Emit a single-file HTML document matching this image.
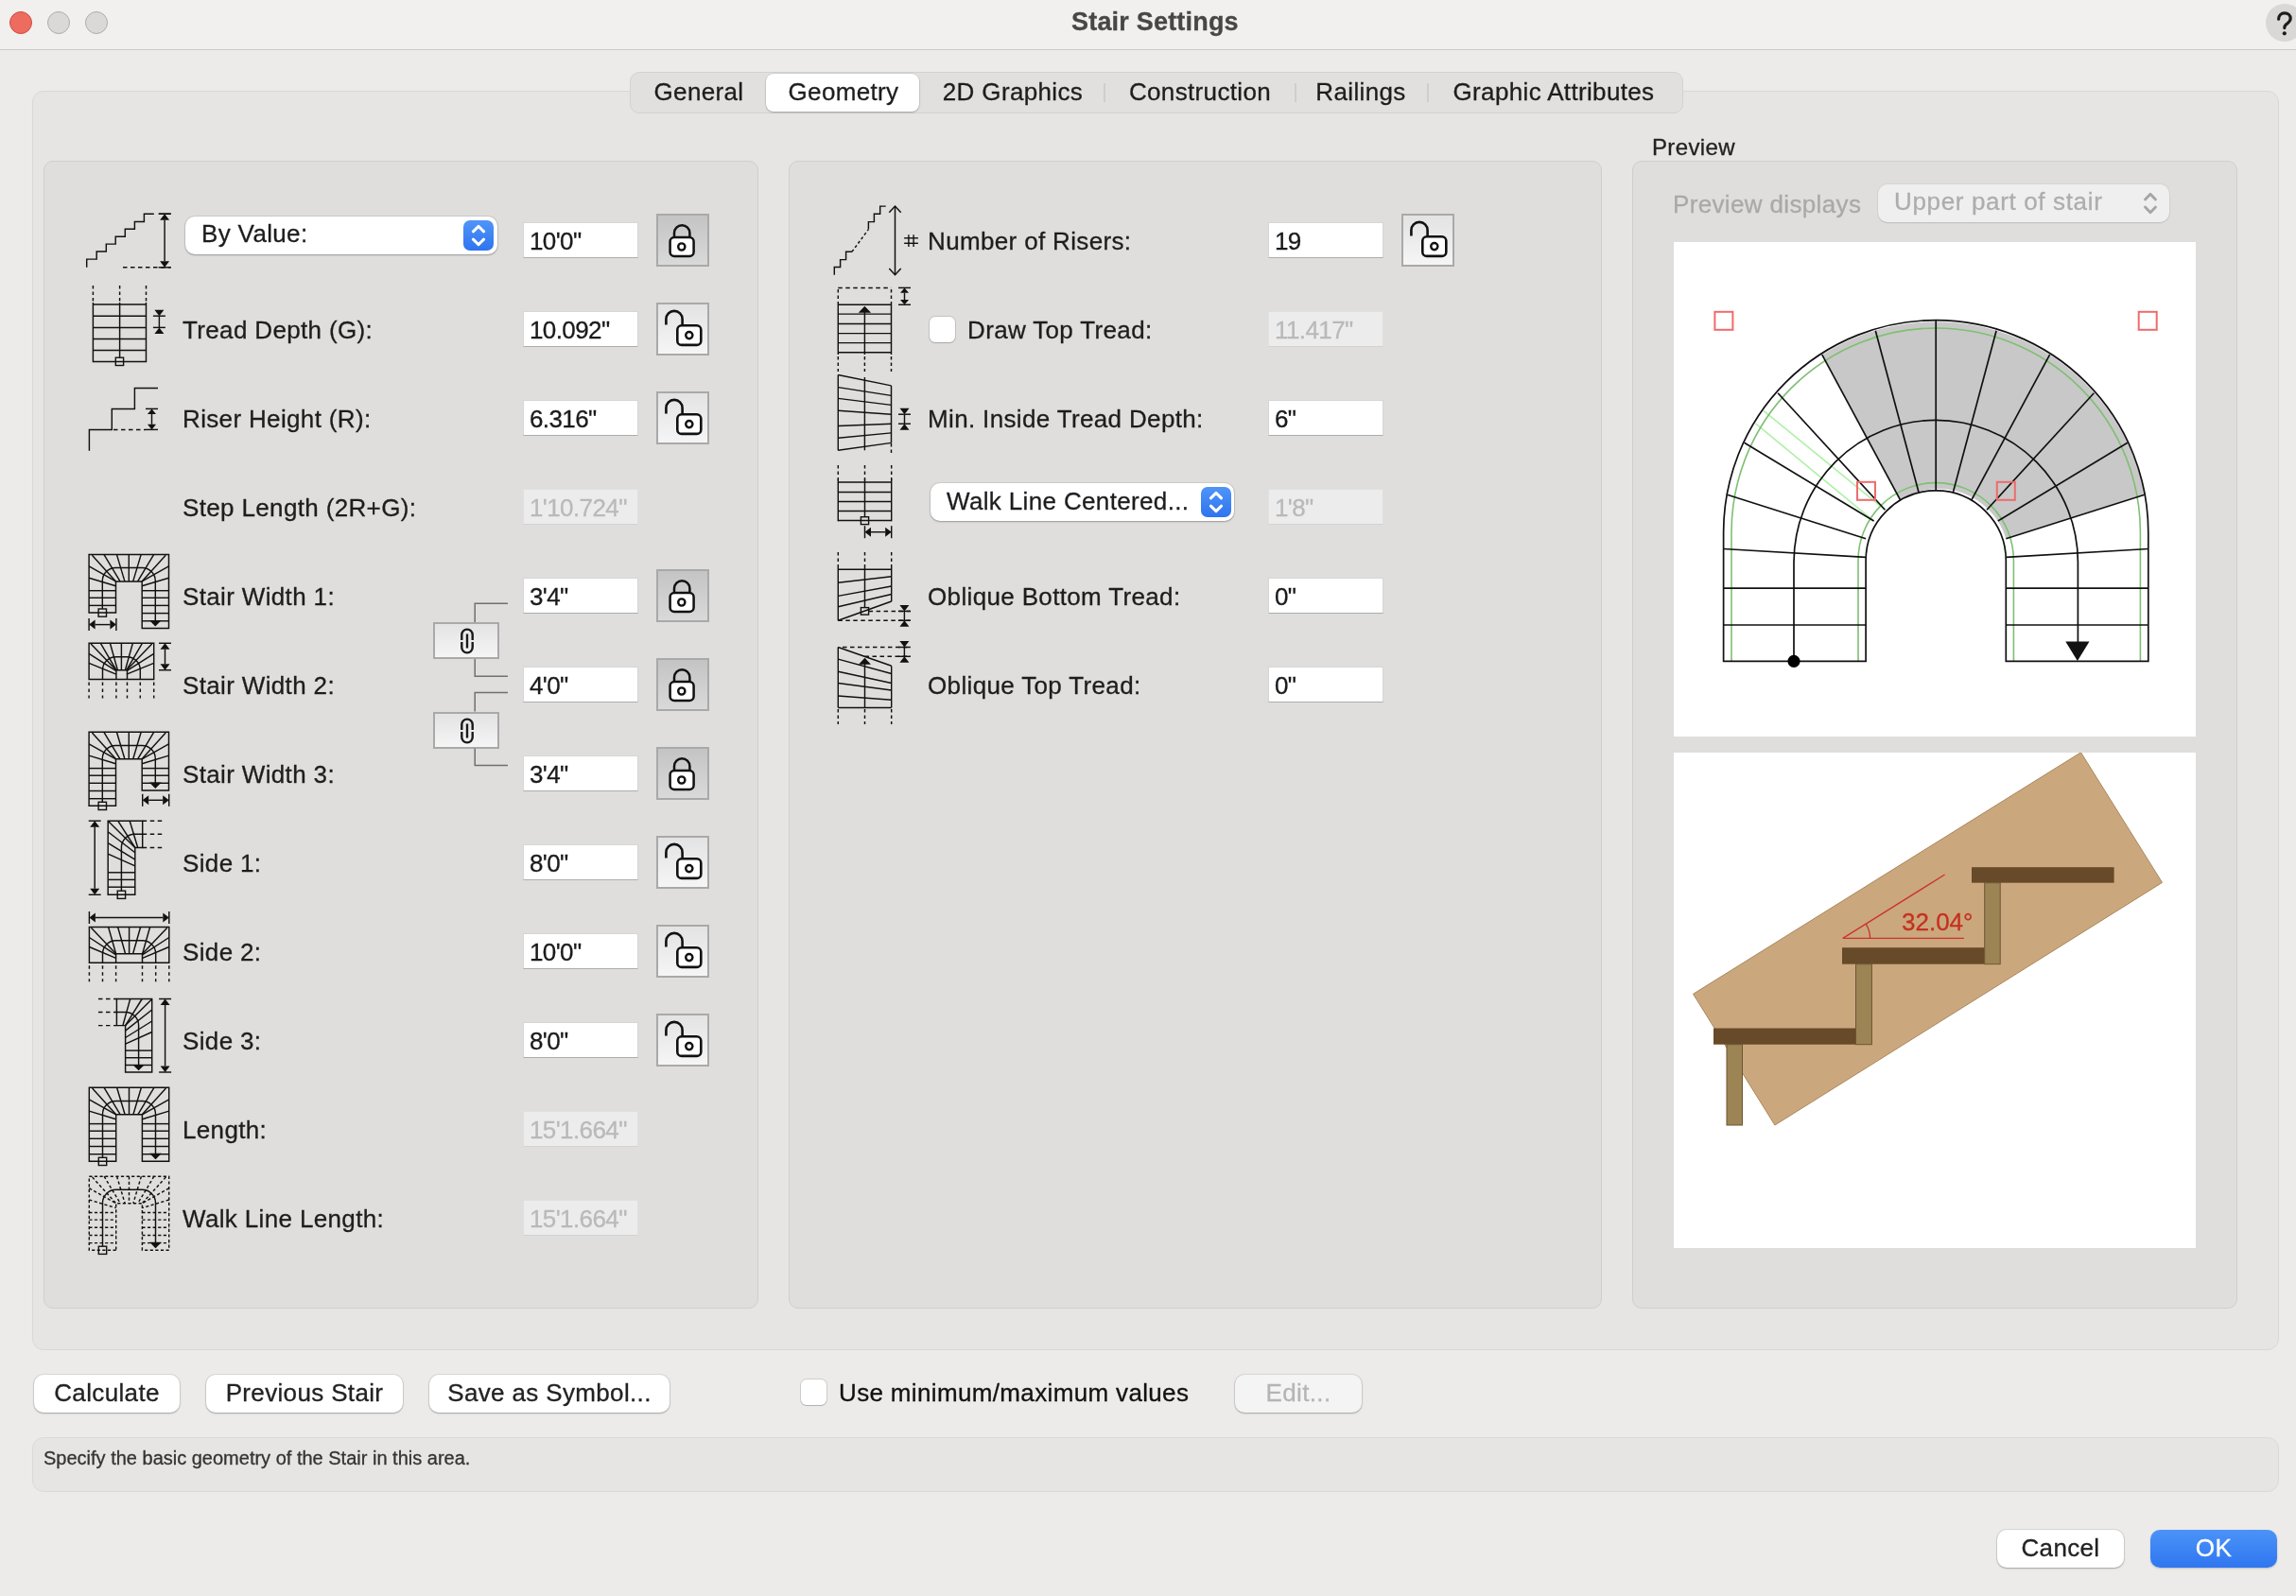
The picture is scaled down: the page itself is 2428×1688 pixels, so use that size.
<!DOCTYPE html>
<html><head><meta charset="utf-8"><title>Stair Settings</title><style>
*{margin:0;padding:0;box-sizing:border-box}
html,body{width:2428px;height:1688px;overflow:hidden}
body{background:#ecebe9;font-family:"Liberation Sans",sans-serif;color:#222;position:relative}
.a{position:absolute}
.t{position:absolute;white-space:nowrap;letter-spacing:0.35px;color:#1d1d1d;will-change:transform;-webkit-text-stroke:0.3px currentColor}
.inp{position:absolute;background:#fff;border:1px solid #d6d6d6;border-bottom:1.5px solid #adadad}
.dis{background:#ececec;border:1px solid #e0e0e0;border-bottom:1px solid #d2d2d2}
.lk{position:absolute;width:56px;height:56px;border:2px solid #a9a9a9;background:linear-gradient(#e3e3e3,#f5f5f5)}
.lk.on{background:linear-gradient(#c4c4c4,#d9d9d9)}
.btn{position:absolute;background:#fff;border-radius:10px;box-shadow:0 0 0 1px rgba(0,0,0,0.08),0 1px 2px rgba(0,0,0,0.25)}
svg{position:absolute;overflow:visible}
</style></head>
<body>
<div class="a" style="left:0px;top:0px;width:2428px;height:53px;background:#f1f0ee;border-bottom:1.5px solid #cbcac8"></div><div class="a" style="left:10px;top:12px;width:24px;height:24px;border-radius:50%;background:#ee6b60;border:1px solid #d14b40"></div><div class="a" style="left:50px;top:12px;width:24px;height:24px;border-radius:50%;background:#dad9d7;border:1px solid #aeadab"></div><div class="a" style="left:90px;top:12px;width:24px;height:24px;border-radius:50%;background:#dad9d7;border:1px solid #aeadab"></div><div class="t" style="left:1133.0px;top:10.1px;font-size:27px;line-height:27px;color:#474747;font-weight:bold;letter-spacing:0.2px;">Stair Settings</div><div class="a" style="left:2396px;top:4px;width:40px;height:40px;border-radius:50%;background:#d9d8d6"></div><svg style="left:-0.6px;top:0.9px" width="2428" height="60"><path d="M2410.6 19.2 C2410.6 15.2 2413.4 12.9 2416.9 12.9 C2420.5 12.9 2423.2 15.3 2423.2 18.6 C2423.2 21.8 2420.6 23.1 2418.6 24.8 C2417.2 26 2416.8 26.9 2416.8 28.6" fill="none" stroke="#1d1d1d" stroke-width="3.2" stroke-linecap="round"/><circle cx="2416.8" cy="34.3" r="2.1" fill="#1d1d1d"/></svg><div class="a" style="left:34px;top:96px;width:2376px;height:1332px;background:#e6e5e3;border:1px solid #d9d8d6;border-radius:12px"></div><div class="a" style="left:666px;top:76px;width:1114px;height:44px;background:#e1e0de;border:1px solid #d3d2d0;border-radius:10px"></div><div class="a" style="left:810px;top:78px;width:162px;height:40px;background:#fff;border-radius:8px;box-shadow:0 0 0 0.5px rgba(0,0,0,0.12),0 1px 2px rgba(0,0,0,0.22)"></div><div class="a" style="left:1167px;top:88px;width:2px;height:20px;background:#cfcecc"></div><div class="a" style="left:1369px;top:88px;width:2px;height:20px;background:#cfcecc"></div><div class="a" style="left:1509px;top:88px;width:2px;height:20px;background:#cfcecc"></div><div class="t" style="left:439.0px;width:600px;text-align:center;top:83.5px;font-size:26px;line-height:26px;">General</div><div class="t" style="left:591.5px;width:600px;text-align:center;top:83.5px;font-size:26px;line-height:26px;">Geometry</div><div class="t" style="left:771.0px;width:600px;text-align:center;top:83.5px;font-size:26px;line-height:26px;">2D Graphics</div><div class="t" style="left:968.5px;width:600px;text-align:center;top:83.5px;font-size:26px;line-height:26px;">Construction</div><div class="t" style="left:1139.0px;width:600px;text-align:center;top:83.5px;font-size:26px;line-height:26px;">Railings</div><div class="t" style="left:1342.5px;width:600px;text-align:center;top:83.5px;font-size:26px;line-height:26px;">Graphic Attributes</div><div class="a" style="left:46px;top:170px;width:756px;height:1214px;background:#dfdedc;border:1px solid #d0cfcd;border-radius:10px"></div><div class="a" style="left:834px;top:170px;width:860px;height:1214px;background:#dfdedc;border:1px solid #d0cfcd;border-radius:10px"></div><div class="a" style="left:1726px;top:170px;width:640px;height:1214px;background:#dfdedc;border:1px solid #d0cfcd;border-radius:10px"></div><div class="inp" style="left:553px;top:235px;width:121.5px;height:37.5px"></div><div class="t" style="left:560.0px;top:241.8px;font-size:26px;line-height:26px;color:#1a1a1a;letter-spacing:-0.6px;">10'0"</div><div class="lk on" style="left:694px;top:226px"><svg width="56" height="56" style="left:-2px;top:-2px" viewBox="0 0 56 56"><path d="M19 25 V20.5 A8.2 8.2 0 0 1 35.4 20.5 V25" fill="none" stroke="#111" stroke-width="2.5"/><rect x="14.6" y="25" width="25" height="20" rx="4.5" fill="#fff" stroke="#111" stroke-width="2.5"/><circle cx="26.8" cy="35" r="3.6" fill="none" stroke="#111" stroke-width="2.4"/></svg></div><div class="t" style="left:193.0px;top:336.0px;font-size:26px;line-height:26px;">Tread Depth (G):</div><div class="inp" style="left:553px;top:329px;width:121.5px;height:37.5px"></div><div class="t" style="left:560.0px;top:335.8px;font-size:26px;line-height:26px;color:#1a1a1a;letter-spacing:-0.6px;">10.092"</div><div class="lk" style="left:694px;top:320px"><svg width="56" height="56" style="left:-2px;top:-2px" viewBox="0 0 56 56"><path d="M10.4 23.5 V17.5 A8.6 8.6 0 0 1 27.6 17.5 V24.3" fill="none" stroke="#111" stroke-width="2.6"/><rect x="22.3" y="24.3" width="25" height="20.6" rx="4.5" fill="#fff" stroke="#111" stroke-width="2.6"/><circle cx="34.8" cy="34.6" r="3.6" fill="none" stroke="#111" stroke-width="2.4"/></svg></div><div class="t" style="left:193.0px;top:430.0px;font-size:26px;line-height:26px;">Riser Height (R):</div><div class="inp" style="left:553px;top:423px;width:121.5px;height:37.5px"></div><div class="t" style="left:560.0px;top:429.8px;font-size:26px;line-height:26px;color:#1a1a1a;letter-spacing:-0.6px;">6.316"</div><div class="lk" style="left:694px;top:414px"><svg width="56" height="56" style="left:-2px;top:-2px" viewBox="0 0 56 56"><path d="M10.4 23.5 V17.5 A8.6 8.6 0 0 1 27.6 17.5 V24.3" fill="none" stroke="#111" stroke-width="2.6"/><rect x="22.3" y="24.3" width="25" height="20.6" rx="4.5" fill="#fff" stroke="#111" stroke-width="2.6"/><circle cx="34.8" cy="34.6" r="3.6" fill="none" stroke="#111" stroke-width="2.4"/></svg></div><div class="t" style="left:193.0px;top:524.0px;font-size:26px;line-height:26px;">Step Length (2R+G):</div><div class="inp dis" style="left:553px;top:517px;width:121.5px;height:37.5px"></div><div class="t" style="left:560.0px;top:523.8px;font-size:26px;line-height:26px;color:#b9b9b9;letter-spacing:-0.6px;">1'10.724"</div><div class="t" style="left:193.0px;top:618.0px;font-size:26px;line-height:26px;">Stair Width 1:</div><div class="inp" style="left:553px;top:611px;width:121.5px;height:37.5px"></div><div class="t" style="left:560.0px;top:617.8px;font-size:26px;line-height:26px;color:#1a1a1a;letter-spacing:-0.6px;">3'4"</div><div class="lk on" style="left:694px;top:602px"><svg width="56" height="56" style="left:-2px;top:-2px" viewBox="0 0 56 56"><path d="M19 25 V20.5 A8.2 8.2 0 0 1 35.4 20.5 V25" fill="none" stroke="#111" stroke-width="2.5"/><rect x="14.6" y="25" width="25" height="20" rx="4.5" fill="#fff" stroke="#111" stroke-width="2.5"/><circle cx="26.8" cy="35" r="3.6" fill="none" stroke="#111" stroke-width="2.4"/></svg></div><div class="t" style="left:193.0px;top:712.0px;font-size:26px;line-height:26px;">Stair Width 2:</div><div class="inp" style="left:553px;top:705px;width:121.5px;height:37.5px"></div><div class="t" style="left:560.0px;top:711.8px;font-size:26px;line-height:26px;color:#1a1a1a;letter-spacing:-0.6px;">4'0"</div><div class="lk on" style="left:694px;top:696px"><svg width="56" height="56" style="left:-2px;top:-2px" viewBox="0 0 56 56"><path d="M19 25 V20.5 A8.2 8.2 0 0 1 35.4 20.5 V25" fill="none" stroke="#111" stroke-width="2.5"/><rect x="14.6" y="25" width="25" height="20" rx="4.5" fill="#fff" stroke="#111" stroke-width="2.5"/><circle cx="26.8" cy="35" r="3.6" fill="none" stroke="#111" stroke-width="2.4"/></svg></div><div class="t" style="left:193.0px;top:806.0px;font-size:26px;line-height:26px;">Stair Width 3:</div><div class="inp" style="left:553px;top:799px;width:121.5px;height:37.5px"></div><div class="t" style="left:560.0px;top:805.8px;font-size:26px;line-height:26px;color:#1a1a1a;letter-spacing:-0.6px;">3'4"</div><div class="lk on" style="left:694px;top:790px"><svg width="56" height="56" style="left:-2px;top:-2px" viewBox="0 0 56 56"><path d="M19 25 V20.5 A8.2 8.2 0 0 1 35.4 20.5 V25" fill="none" stroke="#111" stroke-width="2.5"/><rect x="14.6" y="25" width="25" height="20" rx="4.5" fill="#fff" stroke="#111" stroke-width="2.5"/><circle cx="26.8" cy="35" r="3.6" fill="none" stroke="#111" stroke-width="2.4"/></svg></div><div class="t" style="left:193.0px;top:900.0px;font-size:26px;line-height:26px;">Side 1:</div><div class="inp" style="left:553px;top:893px;width:121.5px;height:37.5px"></div><div class="t" style="left:560.0px;top:899.8px;font-size:26px;line-height:26px;color:#1a1a1a;letter-spacing:-0.6px;">8'0"</div><div class="lk" style="left:694px;top:884px"><svg width="56" height="56" style="left:-2px;top:-2px" viewBox="0 0 56 56"><path d="M10.4 23.5 V17.5 A8.6 8.6 0 0 1 27.6 17.5 V24.3" fill="none" stroke="#111" stroke-width="2.6"/><rect x="22.3" y="24.3" width="25" height="20.6" rx="4.5" fill="#fff" stroke="#111" stroke-width="2.6"/><circle cx="34.8" cy="34.6" r="3.6" fill="none" stroke="#111" stroke-width="2.4"/></svg></div><div class="t" style="left:193.0px;top:994.0px;font-size:26px;line-height:26px;">Side 2:</div><div class="inp" style="left:553px;top:987px;width:121.5px;height:37.5px"></div><div class="t" style="left:560.0px;top:993.8px;font-size:26px;line-height:26px;color:#1a1a1a;letter-spacing:-0.6px;">10'0"</div><div class="lk" style="left:694px;top:978px"><svg width="56" height="56" style="left:-2px;top:-2px" viewBox="0 0 56 56"><path d="M10.4 23.5 V17.5 A8.6 8.6 0 0 1 27.6 17.5 V24.3" fill="none" stroke="#111" stroke-width="2.6"/><rect x="22.3" y="24.3" width="25" height="20.6" rx="4.5" fill="#fff" stroke="#111" stroke-width="2.6"/><circle cx="34.8" cy="34.6" r="3.6" fill="none" stroke="#111" stroke-width="2.4"/></svg></div><div class="t" style="left:193.0px;top:1088.0px;font-size:26px;line-height:26px;">Side 3:</div><div class="inp" style="left:553px;top:1081px;width:121.5px;height:37.5px"></div><div class="t" style="left:560.0px;top:1087.8px;font-size:26px;line-height:26px;color:#1a1a1a;letter-spacing:-0.6px;">8'0"</div><div class="lk" style="left:694px;top:1072px"><svg width="56" height="56" style="left:-2px;top:-2px" viewBox="0 0 56 56"><path d="M10.4 23.5 V17.5 A8.6 8.6 0 0 1 27.6 17.5 V24.3" fill="none" stroke="#111" stroke-width="2.6"/><rect x="22.3" y="24.3" width="25" height="20.6" rx="4.5" fill="#fff" stroke="#111" stroke-width="2.6"/><circle cx="34.8" cy="34.6" r="3.6" fill="none" stroke="#111" stroke-width="2.4"/></svg></div><div class="t" style="left:193.0px;top:1182.0px;font-size:26px;line-height:26px;">Length:</div><div class="inp dis" style="left:553px;top:1175px;width:121.5px;height:37.5px"></div><div class="t" style="left:560.0px;top:1181.8px;font-size:26px;line-height:26px;color:#b9b9b9;letter-spacing:-0.6px;">15'1.664"</div><div class="t" style="left:193.0px;top:1276.0px;font-size:26px;line-height:26px;">Walk Line Length:</div><div class="inp dis" style="left:553px;top:1269px;width:121.5px;height:37.5px"></div><div class="t" style="left:560.0px;top:1275.8px;font-size:26px;line-height:26px;color:#b9b9b9;letter-spacing:-0.6px;">15'1.664"</div><div class="btn" style="left:196px;top:229px;width:330px;height:40px;border-radius:10px"></div><div class="t" style="left:213.0px;top:233.8px;font-size:26px;line-height:26px;">By Value:</div><div class="a" style="left:490px;top:233px;width:32px;height:32px;border-radius:7px;background:linear-gradient(#4f95f8,#2f74ef)"></div><svg style="left:490px;top:233px" width="32" height="32" viewBox="0 0 32 32"><path d="M10.4 11.8 L16 6.4 L21.6 11.8 M10.4 20.2 L16 25.6 L21.6 20.2" fill="none" stroke="#fff" stroke-width="3" stroke-linecap="round" stroke-linejoin="round"/></svg><div class="lk" style="left:458px;top:658px;width:70px;height:39px"></div><svg style="left:486px;top:664px" width="16" height="28" viewBox="0 0 16 28"><path d="M2.3 13 V7.3 A5.7 5.7 0 0 1 13.7 7.3 V13 M2.3 15 V20.7 A5.7 5.7 0 0 0 13.7 20.7 V15" fill="none" stroke="#1a1a1a" stroke-width="2.4"/><line x1="8" y1="6.5" x2="8" y2="21.5" stroke="#1a1a1a" stroke-width="2.4"/></svg><div class="lk" style="left:458px;top:752.5px;width:70px;height:39px"></div><svg style="left:486px;top:758.5px" width="16" height="28" viewBox="0 0 16 28"><path d="M2.3 13 V7.3 A5.7 5.7 0 0 1 13.7 7.3 V13 M2.3 15 V20.7 A5.7 5.7 0 0 0 13.7 20.7 V15" fill="none" stroke="#1a1a1a" stroke-width="2.4"/><line x1="8" y1="6.5" x2="8" y2="21.5" stroke="#1a1a1a" stroke-width="2.4"/></svg><svg style="left:0;top:0" width="2428" height="1688"><path d="M537 638.3 H502.2 V658 M502.2 697 V715.3 H537 M537 732.5 H502.2 V752.5 M502.2 791.5 V809.4 H537" fill="none" stroke="#707070" stroke-width="1.5"/></svg><div class="t" style="left:981.0px;top:242.0px;font-size:26px;line-height:26px;">Number of Risers:</div><div class="inp" style="left:1341px;top:235px;width:121.5px;height:37.5px"></div><div class="t" style="left:1348.0px;top:241.8px;font-size:26px;line-height:26px;color:#1a1a1a;letter-spacing:-0.6px;">19</div><div class="lk" style="left:1482px;top:226px"><svg width="56" height="56" style="left:-2px;top:-2px" viewBox="0 0 56 56"><path d="M10.4 23.5 V17.5 A8.6 8.6 0 0 1 27.6 17.5 V24.3" fill="none" stroke="#111" stroke-width="2.6"/><rect x="22.3" y="24.3" width="25" height="20.6" rx="4.5" fill="#fff" stroke="#111" stroke-width="2.6"/><circle cx="34.8" cy="34.6" r="3.6" fill="none" stroke="#111" stroke-width="2.4"/></svg></div><div class="t" style="left:1023.0px;top:336.0px;font-size:26px;line-height:26px;">Draw Top Tread:</div><div class="inp dis" style="left:1341px;top:329px;width:121.5px;height:37.5px"></div><div class="t" style="left:1348.0px;top:335.8px;font-size:26px;line-height:26px;color:#b9b9b9;letter-spacing:-0.6px;">11.417"</div><div class="t" style="left:981.0px;top:430.0px;font-size:26px;line-height:26px;">Min. Inside Tread Depth:</div><div class="inp" style="left:1341px;top:423px;width:121.5px;height:37.5px"></div><div class="t" style="left:1348.0px;top:429.8px;font-size:26px;line-height:26px;color:#1a1a1a;letter-spacing:-0.6px;">6"</div><div class="inp dis" style="left:1341px;top:517px;width:121.5px;height:37.5px"></div><div class="t" style="left:1348.0px;top:523.8px;font-size:26px;line-height:26px;color:#b9b9b9;letter-spacing:-0.6px;">1'8"</div><div class="t" style="left:981.0px;top:618.0px;font-size:26px;line-height:26px;">Oblique Bottom Tread:</div><div class="inp" style="left:1341px;top:611px;width:121.5px;height:37.5px"></div><div class="t" style="left:1348.0px;top:617.8px;font-size:26px;line-height:26px;color:#1a1a1a;letter-spacing:-0.6px;">0"</div><div class="t" style="left:981.0px;top:712.0px;font-size:26px;line-height:26px;">Oblique Top Tread:</div><div class="inp" style="left:1341px;top:705px;width:121.5px;height:37.5px"></div><div class="t" style="left:1348.0px;top:711.8px;font-size:26px;line-height:26px;color:#1a1a1a;letter-spacing:-0.6px;">0"</div><div class="a" style="left:983px;top:334.5px;width:27px;height:27px;border-radius:6px;background:#fff;box-shadow:0 0 0 1px rgba(0,0,0,0.12),0 1px 1px rgba(0,0,0,0.15)"></div><div class="btn" style="left:984px;top:511px;width:321px;height:40px;border-radius:10px"></div><div class="t" style="left:1001.0px;top:516.5px;font-size:26px;line-height:26px;">Walk Line Centered...</div><div class="a" style="left:1270px;top:515px;width:32px;height:32px;border-radius:7px;background:linear-gradient(#4f95f8,#2f74ef)"></div><svg style="left:1270px;top:515px" width="32" height="32" viewBox="0 0 32 32"><path d="M10.4 11.8 L16 6.4 L21.6 11.8 M10.4 20.2 L16 25.6 L21.6 20.2" fill="none" stroke="#fff" stroke-width="3" stroke-linecap="round" stroke-linejoin="round"/></svg><div class="t" style="left:1747.0px;top:143.7px;font-size:24px;line-height:24px;color:#222;">Preview</div><div class="t" style="left:1769.0px;top:203.0px;font-size:26px;line-height:26px;color:#a9a9a9;">Preview displays</div><div class="a" style="left:1986px;top:195px;width:308px;height:40px;border-radius:10px;background:#efefef;box-shadow:0 0 0 1px rgba(0,0,0,0.04),0 1px 1.5px rgba(0,0,0,0.12)"></div><div class="t" style="left:2003.0px;top:200.0px;font-size:26px;line-height:26px;color:#adadad;letter-spacing:0.65px;">Upper part of stair</div><svg style="left:2262px;top:199px" width="24" height="32" viewBox="0 0 24 32"><path d="M6.5 12 L12 6.3 L17.5 12 M6.5 20 L12 25.7 L17.5 20" fill="none" stroke="#a5a5a5" stroke-width="2.8" stroke-linecap="round" stroke-linejoin="round"/></svg><div class="a" style="left:1770px;top:256px;width:552px;height:523px;background:#fff"></div><div class="a" style="left:1770px;top:796px;width:552px;height:524px;background:#fff"></div><div class="btn" style="left:36px;top:1454px;width:154px;height:40px;background:#fff"></div><div class="t" style="left:-187.0px;width:600px;text-align:center;top:1460.3px;font-size:26px;line-height:26px;color:#222;">Calculate</div><div class="btn" style="left:218px;top:1454px;width:208px;height:40px;background:#fff"></div><div class="t" style="left:22.0px;width:600px;text-align:center;top:1460.3px;font-size:26px;line-height:26px;color:#222;">Previous Stair</div><div class="btn" style="left:454px;top:1454px;width:254px;height:40px;background:#fff"></div><div class="t" style="left:281.0px;width:600px;text-align:center;top:1460.3px;font-size:26px;line-height:26px;color:#222;">Save as Symbol...</div><div class="a" style="left:846.5px;top:1458.5px;width:27px;height:27px;border-radius:6px;background:#fff;box-shadow:0 0 0 1px rgba(0,0,0,0.12),0 1px 1px rgba(0,0,0,0.15)"></div><div class="t" style="left:887.0px;top:1460.3px;font-size:26px;line-height:26px;color:#111;">Use minimum/maximum values</div><div class="btn" style="left:1306px;top:1454px;width:134px;height:40px;background:#f4f4f4"></div><div class="t" style="left:1073.0px;width:600px;text-align:center;top:1460.3px;font-size:26px;line-height:26px;color:#b5b5b5;">Edit...</div><div class="a" style="left:34px;top:1520px;width:2376px;height:57.5px;background:#e6e5e3;border:1px solid #dad9d7;border-radius:12px"></div><div class="t" style="left:46.0px;top:1531.6px;font-size:20px;line-height:20px;color:#333;letter-spacing:0;">Specify the basic geometry of the Stair in this area.</div><div class="btn" style="left:2112px;top:1618px;width:134px;height:40px;background:#fff"></div><div class="t" style="left:1879.0px;width:600px;text-align:center;top:1624.3px;font-size:26px;line-height:26px;color:#222;">Cancel</div><div class="a" style="left:2274px;top:1618px;width:134px;height:40px;border-radius:10px;background:linear-gradient(#4b93f7,#2f76f1);box-shadow:0 1px 2px rgba(0,0,0,0.2)"></div><div class="t" style="left:2041.0px;width:600px;text-align:center;top:1624.0px;font-size:26px;line-height:26px;color:#fff;">OK</div><svg class="a" style="left:0;top:0" width="2428" height="1688" viewBox="0 0 2428 1688"><polyline points="91.70,282.80 91.70,274.10 102.20,274.10 102.20,265.90 112.30,265.90 112.30,258.10 122.20,258.10 122.20,250.20 132.30,250.20 132.30,242.20 142.40,242.20 142.40,234.40 152.40,234.40 152.40,226.20 162.80,226.20" fill="none" stroke="#111" stroke-width="1.45" stroke-linejoin="miter"/><line x1="168.00" y1="226.20" x2="180.80" y2="226.20" stroke="#111" stroke-width="1.45"/><line x1="130.00" y1="282.80" x2="180.80" y2="282.80" stroke="#111" stroke-width="1.45" stroke-dasharray="4.5,3.5"/><line x1="167.60" y1="226.20" x2="180.60" y2="226.20" stroke="#111" stroke-width="1.45"/><line x1="167.60" y1="282.80" x2="180.60" y2="282.80" stroke="#111" stroke-width="1.45"/><line x1="174.10" y1="232.70" x2="174.10" y2="276.30" stroke="#111" stroke-width="1.45"/><polygon points="174.10,226.20 169.10,232.70 179.10,232.70" fill="#111"/><polygon points="174.10,282.80 169.10,276.30 179.10,276.30" fill="#111"/><line x1="98.40" y1="302.00" x2="98.40" y2="320.00" stroke="#111" stroke-width="1.45" stroke-dasharray="3.5,3"/><line x1="126.60" y1="302.00" x2="126.60" y2="320.00" stroke="#111" stroke-width="1.45" stroke-dasharray="3.5,3"/><line x1="154.50" y1="302.00" x2="154.50" y2="320.00" stroke="#111" stroke-width="1.45" stroke-dasharray="3.5,3"/><line x1="98.40" y1="322.00" x2="154.50" y2="322.00" stroke="#111" stroke-width="1.45"/><line x1="98.40" y1="334.20" x2="154.50" y2="334.20" stroke="#111" stroke-width="1.45"/><line x1="98.40" y1="346.40" x2="154.50" y2="346.40" stroke="#111" stroke-width="1.45"/><line x1="98.40" y1="358.50" x2="154.50" y2="358.50" stroke="#111" stroke-width="1.45"/><line x1="98.40" y1="370.50" x2="154.50" y2="370.50" stroke="#111" stroke-width="1.45"/><polyline points="98.40,320.00 98.40,382.50 154.50,382.50 154.50,320.00" fill="none" stroke="#111" stroke-width="1.45" stroke-linejoin="miter"/><line x1="126.60" y1="320.00" x2="126.60" y2="378.20" stroke="#111" stroke-width="1.45"/><rect x="122.30" y="378.20" width="8.30" height="8.30" fill="none" stroke="#111" stroke-width="1.4"/><line x1="161.90" y1="334.20" x2="174.90" y2="334.20" stroke="#111" stroke-width="1.45"/><line x1="161.90" y1="346.40" x2="174.90" y2="346.40" stroke="#111" stroke-width="1.45"/><line x1="168.40" y1="334.20" x2="168.40" y2="346.40" stroke="#111" stroke-width="1.45"/><polygon points="168.40,334.20 163.40,327.70 173.40,327.70" fill="#111"/><polygon points="168.40,346.40 163.40,352.90 173.40,352.90" fill="#111"/><polyline points="94.40,476.70 94.40,454.40 118.30,454.40 118.30,432.40 142.40,432.40 142.40,410.50 167.00,410.50" fill="none" stroke="#111" stroke-width="1.45" stroke-linejoin="miter"/><line x1="120.00" y1="454.40" x2="154.00" y2="454.40" stroke="#111" stroke-width="1.45" stroke-dasharray="4.5,3.5"/><line x1="154.00" y1="454.40" x2="167.00" y2="454.40" stroke="#111" stroke-width="1.45"/><line x1="154.00" y1="432.40" x2="167.00" y2="432.40" stroke="#111" stroke-width="1.45"/><line x1="160.49" y1="432.40" x2="160.51" y2="432.40" stroke="#111" stroke-width="1.45"/><line x1="160.49" y1="454.40" x2="160.51" y2="454.40" stroke="#111" stroke-width="1.45"/><line x1="160.50" y1="438.00" x2="160.50" y2="448.80" stroke="#111" stroke-width="1.45"/><polygon points="160.50,432.40 156.00,438.00 165.00,438.00" fill="#111"/><polygon points="160.50,454.40 156.00,448.80 165.00,448.80" fill="#111"/><path d="M122.50 648.00 H94.10 V586.40 H178.50 V664.40 H150.20 V614.90 H122.50 Z" fill="none" stroke="#111" stroke-width="1.45" /><line x1="136.30" y1="586.40" x2="136.30" y2="614.90" stroke="#111" stroke-width="1.45"/><line x1="123.40" y1="586.40" x2="131.90" y2="614.90" stroke="#111" stroke-width="1.45"/><line x1="149.20" y1="586.40" x2="140.70" y2="614.90" stroke="#111" stroke-width="1.45"/><line x1="109.90" y1="586.40" x2="127.00" y2="614.90" stroke="#111" stroke-width="1.45"/><line x1="162.70" y1="586.40" x2="145.60" y2="614.90" stroke="#111" stroke-width="1.45"/><line x1="97.40" y1="587.20" x2="122.50" y2="614.90" stroke="#111" stroke-width="1.45"/><line x1="175.20" y1="587.20" x2="150.10" y2="614.90" stroke="#111" stroke-width="1.45"/><line x1="94.10" y1="598.90" x2="122.50" y2="614.90" stroke="#111" stroke-width="1.45"/><line x1="178.50" y1="598.90" x2="150.10" y2="614.90" stroke="#111" stroke-width="1.45"/><line x1="94.10" y1="611.20" x2="122.50" y2="619.80" stroke="#111" stroke-width="1.45"/><line x1="178.50" y1="611.20" x2="150.10" y2="619.80" stroke="#111" stroke-width="1.45"/><line x1="94.10" y1="624.70" x2="122.50" y2="624.70" stroke="#111" stroke-width="1.45"/><line x1="150.20" y1="624.70" x2="178.50" y2="624.70" stroke="#111" stroke-width="1.45"/><line x1="94.10" y1="632.30" x2="122.50" y2="632.30" stroke="#111" stroke-width="1.45"/><line x1="150.20" y1="632.30" x2="178.50" y2="632.30" stroke="#111" stroke-width="1.45"/><line x1="94.10" y1="640.40" x2="122.50" y2="640.40" stroke="#111" stroke-width="1.45"/><line x1="150.20" y1="640.40" x2="178.50" y2="640.40" stroke="#111" stroke-width="1.45"/><line x1="150.20" y1="648.60" x2="178.50" y2="648.60" stroke="#111" stroke-width="1.45"/><line x1="150.20" y1="656.80" x2="178.50" y2="656.80" stroke="#111" stroke-width="1.45"/><path d="M108.30 644.00 V614.50 A14 14 0 0 1 122.30 600.50 H150.30 A14 14 0 0 1 164.30 614.50 V661.40" fill="none" stroke="#111" stroke-width="1.45" /><rect x="104.10" y="644.00" width="8.40" height="8.20" fill="none" stroke="#111" stroke-width="1.4"/><polygon points="157.90,655.90 170.70,655.90 164.30,662.40" fill="#111"/><line x1="94.10" y1="654.10" x2="94.10" y2="667.10" stroke="#111" stroke-width="1.45"/><line x1="122.90" y1="654.10" x2="122.90" y2="667.10" stroke="#111" stroke-width="1.45"/><line x1="100.60" y1="660.60" x2="116.40" y2="660.60" stroke="#111" stroke-width="1.45"/><polygon points="94.10,660.60 100.60,655.60 100.60,665.60" fill="#111"/><polygon points="122.90,660.60 116.40,655.60 116.40,665.60" fill="#111"/><path d="M94.10 718.50 V680.30 H162.70 V718.50 Z" fill="none" stroke="#111" stroke-width="1.45" /><path d="M122.90 718.50 V708.70 H134.50 V718.50" fill="none" stroke="#111" stroke-width="1.45" /><path d="M108.50 718.50 V708.70 A14 14 0 0 1 122.50 694.70 H134.30 A14 14 0 0 1 148.30 708.70 V718.50" fill="none" stroke="#111" stroke-width="1.45" /><line x1="128.40" y1="680.30" x2="128.40" y2="708.70" stroke="#111" stroke-width="1.45"/><line x1="116.40" y1="680.30" x2="124.40" y2="708.70" stroke="#111" stroke-width="1.45"/><line x1="140.40" y1="680.30" x2="132.40" y2="708.70" stroke="#111" stroke-width="1.45"/><line x1="106.40" y1="680.30" x2="122.90" y2="708.70" stroke="#111" stroke-width="1.45"/><line x1="150.40" y1="680.30" x2="133.90" y2="708.70" stroke="#111" stroke-width="1.45"/><line x1="96.10" y1="681.10" x2="122.90" y2="708.70" stroke="#111" stroke-width="1.45"/><line x1="160.70" y1="681.10" x2="133.90" y2="708.70" stroke="#111" stroke-width="1.45"/><line x1="94.10" y1="691.30" x2="122.90" y2="709.70" stroke="#111" stroke-width="1.45"/><line x1="162.70" y1="691.30" x2="133.90" y2="709.70" stroke="#111" stroke-width="1.45"/><line x1="94.10" y1="701.30" x2="122.90" y2="713.20" stroke="#111" stroke-width="1.45"/><line x1="162.70" y1="701.30" x2="133.90" y2="713.20" stroke="#111" stroke-width="1.45"/><line x1="94.10" y1="721.50" x2="94.10" y2="738.50" stroke="#111" stroke-width="1.45" stroke-dasharray="3.5,3.5"/><line x1="108.50" y1="721.50" x2="108.50" y2="738.50" stroke="#111" stroke-width="1.45" stroke-dasharray="3.5,3.5"/><line x1="122.90" y1="721.50" x2="122.90" y2="738.50" stroke="#111" stroke-width="1.45" stroke-dasharray="3.5,3.5"/><line x1="134.50" y1="721.50" x2="134.50" y2="738.50" stroke="#111" stroke-width="1.45" stroke-dasharray="3.5,3.5"/><line x1="148.30" y1="721.50" x2="148.30" y2="738.50" stroke="#111" stroke-width="1.45" stroke-dasharray="3.5,3.5"/><line x1="162.70" y1="721.50" x2="162.70" y2="738.50" stroke="#111" stroke-width="1.45" stroke-dasharray="3.5,3.5"/><line x1="168.00" y1="680.30" x2="181.00" y2="680.30" stroke="#111" stroke-width="1.45"/><line x1="168.00" y1="708.70" x2="181.00" y2="708.70" stroke="#111" stroke-width="1.45"/><line x1="174.50" y1="686.80" x2="174.50" y2="702.20" stroke="#111" stroke-width="1.45"/><polygon points="174.50,680.30 169.50,686.80 179.50,686.80" fill="#111"/><polygon points="174.50,708.70 169.50,702.20 179.50,702.20" fill="#111"/><path d="M122.50 852.30 H94.10 V774.30 H178.50 V836.00 H150.20 V802.80 H122.50 Z" fill="none" stroke="#111" stroke-width="1.45" /><line x1="136.30" y1="774.30" x2="136.30" y2="802.80" stroke="#111" stroke-width="1.45"/><line x1="123.40" y1="774.30" x2="131.90" y2="802.80" stroke="#111" stroke-width="1.45"/><line x1="149.20" y1="774.30" x2="140.70" y2="802.80" stroke="#111" stroke-width="1.45"/><line x1="109.90" y1="774.30" x2="127.00" y2="802.80" stroke="#111" stroke-width="1.45"/><line x1="162.70" y1="774.30" x2="145.60" y2="802.80" stroke="#111" stroke-width="1.45"/><line x1="97.40" y1="775.10" x2="122.50" y2="802.80" stroke="#111" stroke-width="1.45"/><line x1="175.20" y1="775.10" x2="150.10" y2="802.80" stroke="#111" stroke-width="1.45"/><line x1="94.10" y1="786.80" x2="122.50" y2="802.80" stroke="#111" stroke-width="1.45"/><line x1="178.50" y1="786.80" x2="150.10" y2="802.80" stroke="#111" stroke-width="1.45"/><line x1="94.10" y1="799.10" x2="122.50" y2="807.70" stroke="#111" stroke-width="1.45"/><line x1="178.50" y1="799.10" x2="150.10" y2="807.70" stroke="#111" stroke-width="1.45"/><line x1="94.10" y1="812.60" x2="122.50" y2="812.60" stroke="#111" stroke-width="1.45"/><line x1="150.20" y1="812.60" x2="178.50" y2="812.60" stroke="#111" stroke-width="1.45"/><line x1="94.10" y1="820.20" x2="122.50" y2="820.20" stroke="#111" stroke-width="1.45"/><line x1="150.20" y1="820.20" x2="178.50" y2="820.20" stroke="#111" stroke-width="1.45"/><line x1="94.10" y1="828.30" x2="122.50" y2="828.30" stroke="#111" stroke-width="1.45"/><line x1="150.20" y1="828.30" x2="178.50" y2="828.30" stroke="#111" stroke-width="1.45"/><line x1="94.10" y1="836.50" x2="122.50" y2="836.50" stroke="#111" stroke-width="1.45"/><line x1="94.10" y1="844.70" x2="122.50" y2="844.70" stroke="#111" stroke-width="1.45"/><path d="M108.30 848.30 V802.40 A14 14 0 0 1 122.30 788.40 H150.30 A14 14 0 0 1 164.30 802.40 V833.00" fill="none" stroke="#111" stroke-width="1.45" /><rect x="104.10" y="848.30" width="8.40" height="8.20" fill="none" stroke="#111" stroke-width="1.4"/><polygon points="157.90,827.50 170.70,827.50 164.30,834.00" fill="#111"/><line x1="150.70" y1="839.80" x2="150.70" y2="852.80" stroke="#111" stroke-width="1.45"/><line x1="178.70" y1="839.80" x2="178.70" y2="852.80" stroke="#111" stroke-width="1.45"/><line x1="157.20" y1="846.30" x2="172.20" y2="846.30" stroke="#111" stroke-width="1.45"/><polygon points="150.70,846.30 157.20,841.30 157.20,851.30" fill="#111"/><polygon points="178.70,846.30 172.20,841.30 172.20,851.30" fill="#111"/><path d="M114.20 946.30 V868.20 H150.70 V896.50 H142.80 V946.30 Z" fill="none" stroke="#111" stroke-width="1.45" /><line x1="150.70" y1="868.20" x2="171.20" y2="868.20" stroke="#111" stroke-width="1.45" stroke-dasharray="4.5,3.5"/><line x1="150.70" y1="882.30" x2="171.20" y2="882.30" stroke="#111" stroke-width="1.45" stroke-dasharray="4.5,3.5"/><line x1="150.70" y1="896.50" x2="171.20" y2="896.50" stroke="#111" stroke-width="1.45" stroke-dasharray="4.5,3.5"/><path d="M128.40 942.20 V896.40 A14 14 0 0 1 142.40 882.30 H150.70" fill="none" stroke="#111" stroke-width="1.45" /><line x1="114.20" y1="922.80" x2="142.80" y2="922.80" stroke="#111" stroke-width="1.45"/><line x1="114.20" y1="930.40" x2="142.80" y2="930.40" stroke="#111" stroke-width="1.45"/><line x1="114.20" y1="938.20" x2="142.80" y2="938.20" stroke="#111" stroke-width="1.45"/><line x1="114.70" y1="868.70" x2="142.80" y2="896.50" stroke="#111" stroke-width="1.45"/><line x1="114.20" y1="879.70" x2="142.80" y2="901.80" stroke="#111" stroke-width="1.45"/><line x1="114.20" y1="891.70" x2="142.80" y2="909.20" stroke="#111" stroke-width="1.45"/><line x1="114.20" y1="903.20" x2="142.80" y2="915.90" stroke="#111" stroke-width="1.45"/><line x1="124.70" y1="868.20" x2="142.80" y2="896.50" stroke="#111" stroke-width="1.45"/><line x1="137.20" y1="868.20" x2="145.70" y2="896.50" stroke="#111" stroke-width="1.45"/><rect x="124.20" y="942.20" width="8.40" height="8.20" fill="none" stroke="#111" stroke-width="1.4"/><line x1="93.70" y1="868.20" x2="106.70" y2="868.20" stroke="#111" stroke-width="1.45"/><line x1="93.70" y1="946.30" x2="106.70" y2="946.30" stroke="#111" stroke-width="1.45"/><line x1="100.20" y1="874.70" x2="100.20" y2="939.80" stroke="#111" stroke-width="1.45"/><polygon points="100.20,868.20 95.20,874.70 105.20,874.70" fill="#111"/><polygon points="100.20,946.30 95.20,939.80 105.20,939.80" fill="#111"/><path d="M94.40 1018.20 V980.50 H178.80 V1018.20 Z" fill="none" stroke="#111" stroke-width="1.45" /><path d="M122.60 1018.20 V1008.80 H150.50 V1018.20" fill="none" stroke="#111" stroke-width="1.45" /><path d="M108.50 1018.20 V1008.80 A14 14 0 0 1 122.50 994.80 H150.70 A14 14 0 0 1 164.70 1008.80 V1018.20" fill="none" stroke="#111" stroke-width="1.45" /><line x1="136.60" y1="980.50" x2="136.60" y2="1008.80" stroke="#111" stroke-width="1.45"/><line x1="124.60" y1="980.50" x2="132.60" y2="1008.80" stroke="#111" stroke-width="1.45"/><line x1="148.60" y1="980.50" x2="140.60" y2="1008.80" stroke="#111" stroke-width="1.45"/><line x1="114.60" y1="980.50" x2="122.60" y2="1008.80" stroke="#111" stroke-width="1.45"/><line x1="158.60" y1="980.50" x2="150.60" y2="1008.80" stroke="#111" stroke-width="1.45"/><line x1="96.40" y1="981.30" x2="122.60" y2="1008.80" stroke="#111" stroke-width="1.45"/><line x1="176.80" y1="981.30" x2="150.60" y2="1008.80" stroke="#111" stroke-width="1.45"/><line x1="94.40" y1="991.50" x2="122.60" y2="1009.80" stroke="#111" stroke-width="1.45"/><line x1="178.80" y1="991.50" x2="150.60" y2="1009.80" stroke="#111" stroke-width="1.45"/><line x1="94.40" y1="1001.50" x2="122.60" y2="1013.30" stroke="#111" stroke-width="1.45"/><line x1="178.80" y1="1001.50" x2="150.60" y2="1013.30" stroke="#111" stroke-width="1.45"/><line x1="94.40" y1="1021.20" x2="94.40" y2="1038.20" stroke="#111" stroke-width="1.45" stroke-dasharray="3.5,3.5"/><line x1="108.50" y1="1021.20" x2="108.50" y2="1038.20" stroke="#111" stroke-width="1.45" stroke-dasharray="3.5,3.5"/><line x1="122.60" y1="1021.20" x2="122.60" y2="1038.20" stroke="#111" stroke-width="1.45" stroke-dasharray="3.5,3.5"/><line x1="150.50" y1="1021.20" x2="150.50" y2="1038.20" stroke="#111" stroke-width="1.45" stroke-dasharray="3.5,3.5"/><line x1="164.70" y1="1021.20" x2="164.70" y2="1038.20" stroke="#111" stroke-width="1.45" stroke-dasharray="3.5,3.5"/><line x1="178.80" y1="1021.20" x2="178.80" y2="1038.20" stroke="#111" stroke-width="1.45" stroke-dasharray="3.5,3.5"/><line x1="94.40" y1="964.00" x2="94.40" y2="977.00" stroke="#111" stroke-width="1.45"/><line x1="178.80" y1="964.00" x2="178.80" y2="977.00" stroke="#111" stroke-width="1.45"/><line x1="100.90" y1="970.50" x2="172.30" y2="970.50" stroke="#111" stroke-width="1.45"/><polygon points="94.40,970.50 100.90,965.50 100.90,975.50" fill="#111"/><polygon points="178.80,970.50 172.30,965.50 172.30,975.50" fill="#111"/><path d="M132.60 1134.00 V1084.60 H123.40 V1056.50 H160.70 V1134.00 Z" fill="none" stroke="#111" stroke-width="1.45" /><line x1="104.00" y1="1056.50" x2="123.40" y2="1056.50" stroke="#111" stroke-width="1.45" stroke-dasharray="4.5,3.5"/><line x1="104.00" y1="1070.50" x2="123.40" y2="1070.50" stroke="#111" stroke-width="1.45" stroke-dasharray="4.5,3.5"/><line x1="104.00" y1="1084.60" x2="123.40" y2="1084.60" stroke="#111" stroke-width="1.45" stroke-dasharray="4.5,3.5"/><path d="M123.40 1070.50 H132.60 A14 14 0 0 1 146.60 1084.50 V1128.50" fill="none" stroke="#111" stroke-width="1.45" /><line x1="132.60" y1="1111.10" x2="160.70" y2="1111.10" stroke="#111" stroke-width="1.45"/><line x1="132.60" y1="1118.70" x2="160.70" y2="1118.70" stroke="#111" stroke-width="1.45"/><line x1="132.60" y1="1126.50" x2="160.70" y2="1126.50" stroke="#111" stroke-width="1.45"/><line x1="160.40" y1="1057.00" x2="132.60" y2="1084.60" stroke="#111" stroke-width="1.45"/><line x1="160.70" y1="1068.00" x2="132.60" y2="1090.10" stroke="#111" stroke-width="1.45"/><line x1="160.70" y1="1080.00" x2="132.60" y2="1097.50" stroke="#111" stroke-width="1.45"/><line x1="160.70" y1="1091.50" x2="132.60" y2="1104.20" stroke="#111" stroke-width="1.45"/><line x1="150.20" y1="1056.50" x2="132.60" y2="1084.60" stroke="#111" stroke-width="1.45"/><line x1="137.70" y1="1056.50" x2="129.90" y2="1084.60" stroke="#111" stroke-width="1.45"/><polygon points="140.20,1125.90 153.00,1125.90 146.60,1132.30" fill="#111"/><line x1="168.10" y1="1056.50" x2="181.10" y2="1056.50" stroke="#111" stroke-width="1.45"/><line x1="168.10" y1="1134.00" x2="181.10" y2="1134.00" stroke="#111" stroke-width="1.45"/><line x1="174.60" y1="1063.00" x2="174.60" y2="1127.50" stroke="#111" stroke-width="1.45"/><polygon points="174.60,1056.50 169.60,1063.00 179.60,1063.00" fill="#111"/><polygon points="174.60,1134.00 169.60,1127.50 179.60,1127.50" fill="#111"/><path d="M122.70 1228.30 H94.30 V1150.30 H178.70 V1228.30 H150.40 V1178.80 H122.70 Z" fill="none" stroke="#111" stroke-width="1.45" /><line x1="136.50" y1="1150.30" x2="136.50" y2="1178.80" stroke="#111" stroke-width="1.45"/><line x1="123.60" y1="1150.30" x2="132.10" y2="1178.80" stroke="#111" stroke-width="1.45"/><line x1="149.40" y1="1150.30" x2="140.90" y2="1178.80" stroke="#111" stroke-width="1.45"/><line x1="110.10" y1="1150.30" x2="127.20" y2="1178.80" stroke="#111" stroke-width="1.45"/><line x1="162.90" y1="1150.30" x2="145.80" y2="1178.80" stroke="#111" stroke-width="1.45"/><line x1="97.60" y1="1151.10" x2="122.70" y2="1178.80" stroke="#111" stroke-width="1.45"/><line x1="175.40" y1="1151.10" x2="150.30" y2="1178.80" stroke="#111" stroke-width="1.45"/><line x1="94.30" y1="1162.80" x2="122.70" y2="1178.80" stroke="#111" stroke-width="1.45"/><line x1="178.70" y1="1162.80" x2="150.30" y2="1178.80" stroke="#111" stroke-width="1.45"/><line x1="94.30" y1="1175.10" x2="122.70" y2="1183.70" stroke="#111" stroke-width="1.45"/><line x1="178.70" y1="1175.10" x2="150.30" y2="1183.70" stroke="#111" stroke-width="1.45"/><line x1="94.30" y1="1188.60" x2="122.70" y2="1188.60" stroke="#111" stroke-width="1.45"/><line x1="150.40" y1="1188.60" x2="178.70" y2="1188.60" stroke="#111" stroke-width="1.45"/><line x1="94.30" y1="1196.20" x2="122.70" y2="1196.20" stroke="#111" stroke-width="1.45"/><line x1="150.40" y1="1196.20" x2="178.70" y2="1196.20" stroke="#111" stroke-width="1.45"/><line x1="94.30" y1="1204.30" x2="122.70" y2="1204.30" stroke="#111" stroke-width="1.45"/><line x1="150.40" y1="1204.30" x2="178.70" y2="1204.30" stroke="#111" stroke-width="1.45"/><line x1="94.30" y1="1212.50" x2="122.70" y2="1212.50" stroke="#111" stroke-width="1.45"/><line x1="150.40" y1="1212.50" x2="178.70" y2="1212.50" stroke="#111" stroke-width="1.45"/><line x1="94.30" y1="1220.70" x2="122.70" y2="1220.70" stroke="#111" stroke-width="1.45"/><line x1="150.40" y1="1220.70" x2="178.70" y2="1220.70" stroke="#111" stroke-width="1.45"/><path d="M108.50 1224.30 V1178.40 A14 14 0 0 1 122.50 1164.40 H150.50 A14 14 0 0 1 164.50 1178.40 V1225.30" fill="none" stroke="#111" stroke-width="1.45" /><rect x="104.30" y="1224.30" width="8.40" height="8.20" fill="none" stroke="#111" stroke-width="1.4"/><polygon points="158.10,1219.80 170.90,1219.80 164.50,1226.30" fill="#111"/><path d="M122.70 1322.20 H94.30 V1244.20 H178.70 V1322.20 H150.40 V1272.70 H122.70 Z" fill="none" stroke="#111" stroke-width="1.45" stroke-dasharray="3.2,2.4" /><line x1="136.50" y1="1244.20" x2="136.50" y2="1272.70" stroke="#111" stroke-width="1.45" stroke-dasharray="3.2,2.4"/><line x1="123.60" y1="1244.20" x2="132.10" y2="1272.70" stroke="#111" stroke-width="1.45" stroke-dasharray="3.2,2.4"/><line x1="149.40" y1="1244.20" x2="140.90" y2="1272.70" stroke="#111" stroke-width="1.45" stroke-dasharray="3.2,2.4"/><line x1="110.10" y1="1244.20" x2="127.20" y2="1272.70" stroke="#111" stroke-width="1.45" stroke-dasharray="3.2,2.4"/><line x1="162.90" y1="1244.20" x2="145.80" y2="1272.70" stroke="#111" stroke-width="1.45" stroke-dasharray="3.2,2.4"/><line x1="97.60" y1="1245.00" x2="122.70" y2="1272.70" stroke="#111" stroke-width="1.45" stroke-dasharray="3.2,2.4"/><line x1="175.40" y1="1245.00" x2="150.30" y2="1272.70" stroke="#111" stroke-width="1.45" stroke-dasharray="3.2,2.4"/><line x1="94.30" y1="1256.70" x2="122.70" y2="1272.70" stroke="#111" stroke-width="1.45" stroke-dasharray="3.2,2.4"/><line x1="178.70" y1="1256.70" x2="150.30" y2="1272.70" stroke="#111" stroke-width="1.45" stroke-dasharray="3.2,2.4"/><line x1="94.30" y1="1269.00" x2="122.70" y2="1277.60" stroke="#111" stroke-width="1.45" stroke-dasharray="3.2,2.4"/><line x1="178.70" y1="1269.00" x2="150.30" y2="1277.60" stroke="#111" stroke-width="1.45" stroke-dasharray="3.2,2.4"/><line x1="94.30" y1="1282.50" x2="122.70" y2="1282.50" stroke="#111" stroke-width="1.45" stroke-dasharray="3.2,2.4"/><line x1="150.40" y1="1282.50" x2="178.70" y2="1282.50" stroke="#111" stroke-width="1.45" stroke-dasharray="3.2,2.4"/><line x1="94.30" y1="1290.10" x2="122.70" y2="1290.10" stroke="#111" stroke-width="1.45" stroke-dasharray="3.2,2.4"/><line x1="150.40" y1="1290.10" x2="178.70" y2="1290.10" stroke="#111" stroke-width="1.45" stroke-dasharray="3.2,2.4"/><line x1="94.30" y1="1298.20" x2="122.70" y2="1298.20" stroke="#111" stroke-width="1.45" stroke-dasharray="3.2,2.4"/><line x1="150.40" y1="1298.20" x2="178.70" y2="1298.20" stroke="#111" stroke-width="1.45" stroke-dasharray="3.2,2.4"/><line x1="94.30" y1="1306.40" x2="122.70" y2="1306.40" stroke="#111" stroke-width="1.45" stroke-dasharray="3.2,2.4"/><line x1="150.40" y1="1306.40" x2="178.70" y2="1306.40" stroke="#111" stroke-width="1.45" stroke-dasharray="3.2,2.4"/><line x1="94.30" y1="1314.60" x2="122.70" y2="1314.60" stroke="#111" stroke-width="1.45" stroke-dasharray="3.2,2.4"/><line x1="150.40" y1="1314.60" x2="178.70" y2="1314.60" stroke="#111" stroke-width="1.45" stroke-dasharray="3.2,2.4"/><path d="M108.50 1318.20 V1272.30 A14 14 0 0 1 122.50 1258.30 H150.50 A14 14 0 0 1 164.50 1272.30 V1319.20" fill="none" stroke="#111" stroke-width="1.45" /><rect x="104.30" y="1318.20" width="8.40" height="8.20" fill="none" stroke="#111" stroke-width="1.4"/><polygon points="158.10,1313.70 170.90,1313.70 164.50,1320.20" fill="#111"/><polyline points="882.30,290.70 882.30,282.50 888.60,282.50 888.60,274.60 894.60,274.60 894.60,266.30 900.90,266.30" fill="none" stroke="#111" stroke-width="1.45" stroke-linejoin="miter"/><line x1="900.90" y1="266.30" x2="918.40" y2="242.60" stroke="#111" stroke-width="1.45" stroke-dasharray="3,2.5"/><polyline points="918.40,242.60 918.40,234.60 924.40,234.60 924.40,226.30 930.70,226.30 930.70,218.10 936.70,218.10" fill="none" stroke="#111" stroke-width="1.45" stroke-linejoin="miter"/><line x1="946.50" y1="218.10" x2="946.50" y2="290.70" stroke="#111" stroke-width="1.5"/><polyline points="940.30,224.80 946.50,218.10 952.70,224.80" fill="none" stroke="#111" stroke-width="1.5" stroke-linejoin="miter"/><polyline points="940.30,284.00 946.50,290.70 952.70,284.00" fill="none" stroke="#111" stroke-width="1.5" stroke-linejoin="miter"/><line x1="960.90" y1="248.20" x2="960.90" y2="261.10" stroke="#111" stroke-width="1.4"/><line x1="966.10" y1="248.20" x2="966.10" y2="261.10" stroke="#111" stroke-width="1.4"/><line x1="956.10" y1="251.80" x2="970.90" y2="251.80" stroke="#111" stroke-width="1.4"/><line x1="956.10" y1="257.30" x2="970.90" y2="257.30" stroke="#111" stroke-width="1.4"/><line x1="886.30" y1="304.40" x2="942.50" y2="304.40" stroke="#111" stroke-width="1.45" stroke-dasharray="4.5,3.5"/><line x1="886.30" y1="306.00" x2="886.30" y2="321.00" stroke="#111" stroke-width="1.45" stroke-dasharray="3.5,3"/><line x1="942.50" y1="306.00" x2="942.50" y2="321.00" stroke="#111" stroke-width="1.45" stroke-dasharray="3.5,3"/><line x1="886.30" y1="322.30" x2="942.50" y2="322.30" stroke="#111" stroke-width="1.45"/><line x1="886.30" y1="332.10" x2="942.50" y2="332.10" stroke="#111" stroke-width="1.45"/><line x1="886.30" y1="342.50" x2="942.50" y2="342.50" stroke="#111" stroke-width="1.45"/><line x1="886.30" y1="352.60" x2="942.50" y2="352.60" stroke="#111" stroke-width="1.45"/><line x1="886.30" y1="362.60" x2="942.50" y2="362.60" stroke="#111" stroke-width="1.45"/><line x1="886.30" y1="372.80" x2="942.50" y2="372.80" stroke="#111" stroke-width="1.45"/><line x1="886.30" y1="321.00" x2="886.30" y2="375.00" stroke="#111" stroke-width="1.45"/><line x1="942.50" y1="321.00" x2="942.50" y2="375.00" stroke="#111" stroke-width="1.45"/><line x1="914.40" y1="330.00" x2="914.40" y2="375.00" stroke="#111" stroke-width="1.45"/><polygon points="907.70,330.70 921.10,330.70 914.40,323.70" fill="#111"/><line x1="886.30" y1="377.00" x2="886.30" y2="393.00" stroke="#111" stroke-width="1.45" stroke-dasharray="3.5,3"/><line x1="914.40" y1="377.00" x2="914.40" y2="393.00" stroke="#111" stroke-width="1.45" stroke-dasharray="3.5,3"/><line x1="942.50" y1="377.00" x2="942.50" y2="393.00" stroke="#111" stroke-width="1.45" stroke-dasharray="3.5,3"/><line x1="950.00" y1="304.40" x2="963.00" y2="304.40" stroke="#111" stroke-width="1.45"/><line x1="950.00" y1="322.30" x2="963.00" y2="322.30" stroke="#111" stroke-width="1.45"/><line x1="956.50" y1="309.70" x2="956.50" y2="317.00" stroke="#111" stroke-width="1.45"/><polygon points="956.50,304.40 952.00,309.70 961.00,309.70" fill="#111"/><polygon points="956.50,322.30 952.00,317.00 961.00,317.00" fill="#111"/><line x1="886.30" y1="396.50" x2="886.30" y2="476.30" stroke="#111" stroke-width="1.45"/><line x1="942.50" y1="407.90" x2="942.50" y2="468.40" stroke="#111" stroke-width="1.45"/><line x1="914.40" y1="399.00" x2="914.40" y2="476.30" stroke="#111" stroke-width="1.45"/><line x1="886.30" y1="396.50" x2="942.50" y2="407.90" stroke="#111" stroke-width="1.45"/><line x1="886.30" y1="409.60" x2="942.50" y2="418.40" stroke="#111" stroke-width="1.45"/><line x1="886.30" y1="421.40" x2="942.50" y2="428.40" stroke="#111" stroke-width="1.45"/><line x1="886.30" y1="434.20" x2="942.50" y2="438.20" stroke="#111" stroke-width="1.45"/><line x1="886.30" y1="450.50" x2="942.50" y2="448.20" stroke="#111" stroke-width="1.45"/><line x1="886.30" y1="463.20" x2="942.50" y2="457.90" stroke="#111" stroke-width="1.45"/><line x1="886.30" y1="476.30" x2="942.50" y2="468.40" stroke="#111" stroke-width="1.45"/><line x1="942.50" y1="469.00" x2="942.50" y2="480.00" stroke="#111" stroke-width="1.45" stroke-dasharray="3.5,3"/><line x1="950.00" y1="438.20" x2="963.00" y2="438.20" stroke="#111" stroke-width="1.45"/><line x1="950.00" y1="448.20" x2="963.00" y2="448.20" stroke="#111" stroke-width="1.45"/><line x1="956.50" y1="438.20" x2="956.50" y2="448.20" stroke="#111" stroke-width="1.45"/><polygon points="956.50,438.20 951.50,431.70 961.50,431.70" fill="#111"/><polygon points="956.50,448.20 951.50,454.70 961.50,454.70" fill="#111"/><line x1="886.30" y1="492.00" x2="886.30" y2="508.00" stroke="#111" stroke-width="1.45" stroke-dasharray="3.5,3"/><line x1="914.50" y1="492.00" x2="914.50" y2="508.00" stroke="#111" stroke-width="1.45" stroke-dasharray="3.5,3"/><line x1="942.70" y1="492.00" x2="942.70" y2="508.00" stroke="#111" stroke-width="1.45" stroke-dasharray="3.5,3"/><line x1="886.30" y1="510.00" x2="942.70" y2="510.00" stroke="#111" stroke-width="1.45"/><line x1="886.30" y1="520.40" x2="942.70" y2="520.40" stroke="#111" stroke-width="1.45"/><line x1="886.30" y1="530.40" x2="942.70" y2="530.40" stroke="#111" stroke-width="1.45"/><line x1="886.30" y1="540.50" x2="942.70" y2="540.50" stroke="#111" stroke-width="1.45"/><line x1="886.30" y1="550.50" x2="942.70" y2="550.50" stroke="#111" stroke-width="1.45"/><line x1="886.30" y1="507.00" x2="886.30" y2="551.30" stroke="#111" stroke-width="1.45"/><line x1="942.70" y1="507.00" x2="942.70" y2="551.30" stroke="#111" stroke-width="1.45"/><line x1="914.50" y1="507.00" x2="914.50" y2="546.70" stroke="#111" stroke-width="1.45"/><rect x="910.40" y="546.70" width="8.20" height="7.90" fill="none" stroke="#111" stroke-width="1.4"/><line x1="914.50" y1="556.20" x2="914.50" y2="569.20" stroke="#111" stroke-width="1.45"/><line x1="942.70" y1="556.20" x2="942.70" y2="569.20" stroke="#111" stroke-width="1.45"/><line x1="921.00" y1="562.70" x2="936.20" y2="562.70" stroke="#111" stroke-width="1.45"/><polygon points="914.50,562.70 921.00,557.70 921.00,567.70" fill="#111"/><polygon points="942.70,562.70 936.20,557.70 936.20,567.70" fill="#111"/><line x1="886.30" y1="584.00" x2="886.30" y2="600.00" stroke="#111" stroke-width="1.45" stroke-dasharray="3.5,3"/><line x1="914.50" y1="584.00" x2="914.50" y2="600.00" stroke="#111" stroke-width="1.45" stroke-dasharray="3.5,3"/><line x1="942.70" y1="584.00" x2="942.70" y2="600.00" stroke="#111" stroke-width="1.45" stroke-dasharray="3.5,3"/><line x1="886.30" y1="602.20" x2="942.70" y2="602.20" stroke="#111" stroke-width="1.45"/><line x1="886.30" y1="600.00" x2="886.30" y2="656.30" stroke="#111" stroke-width="1.45"/><line x1="942.70" y1="600.00" x2="942.70" y2="636.20" stroke="#111" stroke-width="1.45"/><line x1="914.50" y1="600.00" x2="914.50" y2="642.60" stroke="#111" stroke-width="1.45"/><line x1="886.30" y1="616.30" x2="942.70" y2="609.70" stroke="#111" stroke-width="1.45"/><line x1="886.30" y1="630.40" x2="942.70" y2="620.00" stroke="#111" stroke-width="1.45"/><line x1="886.30" y1="641.70" x2="942.70" y2="628.50" stroke="#111" stroke-width="1.45"/><line x1="886.30" y1="656.30" x2="942.70" y2="636.00" stroke="#111" stroke-width="1.45"/><rect x="910.40" y="642.60" width="8.20" height="7.50" fill="none" stroke="#111" stroke-width="1.4"/><line x1="918.60" y1="646.40" x2="963.00" y2="646.40" stroke="#111" stroke-width="1.45" stroke-dasharray="4.5,3.5"/><line x1="886.30" y1="656.30" x2="963.00" y2="656.30" stroke="#111" stroke-width="1.45" stroke-dasharray="4.5,3.5"/><line x1="949.90" y1="646.40" x2="962.90" y2="646.40" stroke="#111" stroke-width="1.45"/><line x1="949.90" y1="656.30" x2="962.90" y2="656.30" stroke="#111" stroke-width="1.45"/><line x1="956.40" y1="646.40" x2="956.40" y2="656.30" stroke="#111" stroke-width="1.45"/><polygon points="956.40,646.40 951.40,639.90 961.40,639.90" fill="#111"/><polygon points="956.40,656.30 951.40,662.80 961.40,662.80" fill="#111"/><line x1="891.00" y1="684.50" x2="963.00" y2="684.50" stroke="#111" stroke-width="1.45" stroke-dasharray="4.5,3.5"/><line x1="914.50" y1="694.30" x2="963.00" y2="694.30" stroke="#111" stroke-width="1.45" stroke-dasharray="4.5,3.5"/><line x1="949.90" y1="684.50" x2="962.90" y2="684.50" stroke="#111" stroke-width="1.45"/><line x1="949.90" y1="694.30" x2="962.90" y2="694.30" stroke="#111" stroke-width="1.45"/><line x1="956.40" y1="684.50" x2="956.40" y2="694.30" stroke="#111" stroke-width="1.45"/><polygon points="956.40,684.50 951.40,678.00 961.40,678.00" fill="#111"/><polygon points="956.40,694.30 951.40,700.80 961.40,700.80" fill="#111"/><line x1="886.30" y1="684.50" x2="886.30" y2="748.40" stroke="#111" stroke-width="1.45"/><line x1="942.70" y1="704.30" x2="942.70" y2="748.40" stroke="#111" stroke-width="1.45"/><line x1="886.30" y1="748.40" x2="942.70" y2="748.40" stroke="#111" stroke-width="1.45"/><line x1="886.30" y1="684.50" x2="942.70" y2="704.30" stroke="#111" stroke-width="1.45"/><line x1="886.30" y1="697.10" x2="942.70" y2="712.50" stroke="#111" stroke-width="1.45"/><line x1="886.30" y1="710.30" x2="942.70" y2="722.50" stroke="#111" stroke-width="1.45"/><line x1="886.30" y1="722.50" x2="942.70" y2="730.00" stroke="#111" stroke-width="1.45"/><line x1="886.30" y1="736.00" x2="942.70" y2="740.30" stroke="#111" stroke-width="1.45"/><line x1="914.50" y1="702.00" x2="914.50" y2="748.40" stroke="#111" stroke-width="1.45"/><polygon points="908.00,702.70 921.00,702.70 914.50,695.80" fill="#111"/><line x1="886.30" y1="750.00" x2="886.30" y2="766.00" stroke="#111" stroke-width="1.45" stroke-dasharray="3.5,3"/><line x1="914.50" y1="750.00" x2="914.50" y2="766.00" stroke="#111" stroke-width="1.45" stroke-dasharray="3.5,3"/><line x1="942.70" y1="750.00" x2="942.70" y2="766.00" stroke="#111" stroke-width="1.45" stroke-dasharray="3.5,3"/><path d="M1926.80 375.20 A224.6 224.6 0 0 1 2267.80 523.30 L2121.30 569.70 A74.1 74.1 0 0 0 2009.70 529.10 Z" fill="#c8c8c8" stroke="none"/><line x1="1864.90" y1="434.40" x2="1993.40" y2="539.20" stroke="#aef0a6" stroke-width="1.6"/><line x1="1856.40" y1="447.90" x2="1981.60" y2="551.10" stroke="#aef0a6" stroke-width="1.6"/><path d="M1831 699.3 V563.2 A216.2 216.2 0 0 1 2263.4 563.2 V699.3" fill="none" stroke="#7fbf72" stroke-width="1.6" /><path d="M1965 699.3 V592.8 A82.2 82.2 0 0 1 2129.4 592.8 V699.3" fill="none" stroke="#7fbf72" stroke-width="1.6" /><path d="M1822.6 699.3 V563.2 A224.6 224.6 0 0 1 2271.8 563.2 V699.3 H2121.3 V593 A74.1 74.1 0 0 0 1973.1 593 V699.3 Z" fill="none" stroke="#111" stroke-width="1.7" /><path d="M1897 699.3 V594.5 A150.2 150.2 0 0 1 2197.4 594.5 V690" fill="none" stroke="#111" stroke-width="1.7" /><line x1="2047.20" y1="338.60" x2="2047.20" y2="519.00" stroke="#111" stroke-width="1.7"/><line x1="1983.30" y1="349.80" x2="2029.00" y2="520.60" stroke="#111" stroke-width="1.7"/><line x1="2111.10" y1="349.80" x2="2065.40" y2="520.60" stroke="#111" stroke-width="1.7"/><line x1="1926.80" y1="375.20" x2="2009.70" y2="529.10" stroke="#111" stroke-width="1.7"/><line x1="2167.60" y1="375.20" x2="2084.70" y2="529.10" stroke="#111" stroke-width="1.7"/><line x1="1880.10" y1="415.80" x2="1993.40" y2="539.20" stroke="#111" stroke-width="1.7"/><line x1="2214.30" y1="415.80" x2="2101.00" y2="539.20" stroke="#111" stroke-width="1.7"/><line x1="1844.60" y1="468.20" x2="1981.60" y2="551.10" stroke="#111" stroke-width="1.7"/><line x1="2249.80" y1="468.20" x2="2112.80" y2="551.10" stroke="#111" stroke-width="1.7"/><line x1="1826.60" y1="523.30" x2="1973.10" y2="569.70" stroke="#111" stroke-width="1.7"/><line x1="2267.80" y1="523.30" x2="2121.30" y2="569.70" stroke="#111" stroke-width="1.7"/><line x1="1822.60" y1="580.50" x2="1973.10" y2="589.30" stroke="#111" stroke-width="1.7"/><line x1="2271.80" y1="580.50" x2="2121.30" y2="589.30" stroke="#111" stroke-width="1.7"/><line x1="1822.60" y1="622.10" x2="1973.10" y2="622.10" stroke="#111" stroke-width="1.7"/><line x1="2121.30" y1="622.10" x2="2271.80" y2="622.10" stroke="#111" stroke-width="1.7"/><line x1="1822.60" y1="661.00" x2="1973.10" y2="661.00" stroke="#111" stroke-width="1.7"/><line x1="2121.30" y1="661.00" x2="2271.80" y2="661.00" stroke="#111" stroke-width="1.7"/><rect x="1813.40" y="329.80" width="19.00" height="19.00" fill="none" stroke="#ef6b6b" stroke-width="2"/><rect x="2261.70" y="329.80" width="19.00" height="19.00" fill="none" stroke="#ef6b6b" stroke-width="2"/><rect x="1964.00" y="509.80" width="19.00" height="19.00" fill="none" stroke="#ef6b6b" stroke-width="2"/><rect x="2111.80" y="509.80" width="19.00" height="19.00" fill="none" stroke="#ef6b6b" stroke-width="2"/><circle cx="1897" cy="699.3" r="6.6" fill="#000"/><polygon points="2184.30,678.50 2209.50,678.50 2196.90,699.00" fill="#111"/><clipPath id="c2"><rect x="1770" y="796" width="552" height="524"/></clipPath><g clip-path="url(#c2)"><polygon points="1790.5,1051.3 2200.5,795.8 2286.5,933.4 1876.9,1190" fill="#cba77e" stroke="#a9885c" stroke-width="1"/></g><rect x="1812" y="1087.5" width="150.5" height="17.2" fill="#674a29"/><rect x="1948" y="1002.2" width="150.7" height="17.5" fill="#674a29"/><rect x="2085" y="917.2" width="150.6" height="16.5" fill="#674a29"/><rect x="1826" y="1104.7" width="16.5" height="85.3" fill="#9d8454" stroke="#6e5533" stroke-width="1"/><rect x="1962.5" y="1019.7" width="16.9" height="85" fill="#9d8454" stroke="#6e5533" stroke-width="1"/><rect x="2098.7" y="933.7" width="16.5" height="86" fill="#9d8454" stroke="#6e5533" stroke-width="1"/><line x1="1948.80" y1="992.40" x2="2056.60" y2="925.00" stroke="#c9352a" stroke-width="1.3"/><line x1="1948.80" y1="992.40" x2="2077.00" y2="992.40" stroke="#c9352a" stroke-width="1.3"/><path d="M1977.60 992.4 A28.8 28.8 0 0 0 1973.21 977.12" fill="none" stroke="#c9352a" stroke-width="1.3"/></svg><div class="t" style="left:2011.0px;top:962.0px;font-size:26px;line-height:26px;color:#c4311f;letter-spacing:0;">32.04°</div>
</body></html>
